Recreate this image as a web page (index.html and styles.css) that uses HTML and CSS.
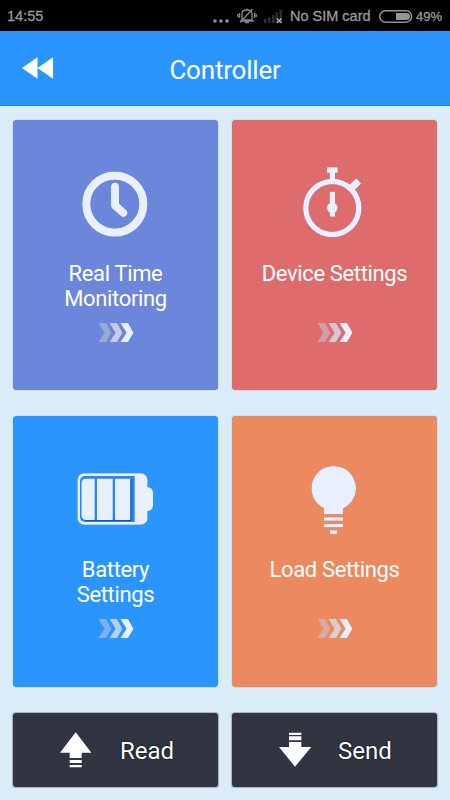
FILE: index.html
```html
<!DOCTYPE html>
<html lang="en">
<head>
    <meta charset="UTF-8">
    <meta name="viewport" content="width=device-width, initial-scale=1.0">
    <title>Controller</title>
    <link rel="stylesheet" href="styles.css">
</head>
<body>

    <!-- Phone status bar -->
    <div class="status-bar">
        <span class="time">14:55</span>
        <svg class="status-dots" width="16" height="4" viewBox="0 0 16 4">
            <circle cx="2" cy="2" r="1.8"/>
            <circle cx="8" cy="2" r="1.8"/>
            <circle cx="14" cy="2" r="1.8"/>
        </svg>
        <svg class="status-mute" width="20" height="18" viewBox="0 0 20 18">
            <path d="M5 13V6.500C5 4 7 3 10 3s5 1 5 3.500V13zM3 14h14M8 15.500h4M10 1.500V3M2.500 6v5M.8 7v3M17.500 6v5M19.200 7v3M3 15.500L15.500 2"/>
        </svg>
        <svg class="status-signal" width="18" height="15" viewBox="0 0 18 15">
            <path class="bars" d="M0 10h2.500v4H0zM4 8.500h2.500V14H4zM8 6h2.500v8H8zM11.500 3.500H14V14h-2.500zM15.500 1H18v13h-2.500z"/>
            <path class="cross" d="M13 9.500l4.500 4.500M17.500 9.500L13 14"/>
        </svg>
        <span class="carrier">No SIM card</span>
        <svg class="status-battery" width="34" height="13" viewBox="0 0 34 13">
            <rect x=".8" y=".8" width="31.800" height="11.400" rx="5.500"/>
            <path class="level" d="M17 3h10.500a3.500 3.500 0 0 1 0 7H17z"/>
        </svg>
        <span class="percent">49%</span>
    </div>

    <header class="header">
        <a href="#" class="back">
            <svg width="32" height="22" viewBox="0 0 32 22">
                <path d="M0 11L15.500 0.300V21.700zM15.500 11L31 0.300V21.700z"/>
            </svg>
        </a>
        <h1>Controller</h1>
    </header>

    <svg class="defs" width="0" height="0">
        <symbol id="arrows" viewBox="0 0 36 21">
            <path opacity=".45" d="M.5 1h7.500l5.500 9.700-5.500 9.300H.5l6-9.300z"/>
            <path opacity=".75" d="M11.500 1h7.500l5.500 9.700-5.500 9.300h-7.500l6-9.300z"/>
            <path d="M22.500 1h7.500l5.500 9.700-5.500 9.300h-7.500l6-9.300z"/>
        </symbol>
    </svg>

    <div class="container">
        <a href="#" class="card monitoring">
            <svg class="icon" viewBox="0 0 81 81">
                <circle cx="39.800" cy="39.100" r="28.500" fill="none" stroke="#e8efff" stroke-width="8.200"/>
                <path d="M40 21.800V40.500L48.300 47.800" fill="none" stroke="#e8efff" stroke-width="8" stroke-linecap="round" stroke-linejoin="round"/>
            </svg>
            <span class="label">Real Time<br>Monitoring</span>
            <svg class="arrows"><use href="#arrows"/></svg>
        </a>

        <a href="#" class="card device">
            <svg class="icon" viewBox="0 0 81 81">
                <circle cx="38.300" cy="43" r="26.500" fill="none" stroke="#e8efff" stroke-width="5.500"/>
                <path d="M33 2.300h10.700v5.400H41V16h-5.300V7.700H33z"/>
                <path d="M62.300 13.300L67.300 18.400 59.500 26 54.300 21z"/>
                <path d="M35.700 26.700H41v25h-5.300z"/>
                <circle cx="38.300" cy="42.800" r="5.400"/>
            </svg>
            <span class="label">Device Settings</span>
            <svg class="arrows"><use href="#arrows"/></svg>
        </a>

        <a href="#" class="card battery">
            <svg class="icon" viewBox="0 0 81 81">
                <path d="M9 12.300h57a6.500 6.500 0 0 1 6.500 6.500V26a5.500 5.500 0 0 1 5.500 5.500V44.500a5.500 5.500 0 0 1-5.500 5.500v7.200a6.500 6.500 0 0 1-6.500 6.500H9a6.500 6.500 0 0 1-6.500-6.500V18.800A6.500 6.500 0 0 1 9 12.300z"/>
                <path fill="#2389f0" d="M10 15h49.700v46H10a5 5 0 0 1-5-5V20a5 5 0 0 1 5-5z"/>
                <path fill="#0d4fa3" d="M54.500 18h2v42h-46v-1.500h44z"/>
                <path d="M11 17.700h8.700V59H11a4.500 4.500 0 0 1-4.500-4.500V22a4.500 4.500 0 0 1 4.500-4.300z"/>
                <path d="M22 17.700h15.700V59H22zM40 17.700h15.300V59H40z"/>
            </svg>
            <span class="label">Battery<br>Settings</span>
            <svg class="arrows"><use href="#arrows"/></svg>
        </a>

        <a href="#" class="card load">
            <svg class="icon" viewBox="0 0 81 81">
                <circle cx="39.700" cy="27.200" r="22.300"/>
                <path d="M30 44h19v9.300H30zM30 56.300h19v3.400H30zM30 63h19v3.300H30zM36 69.300h7V73h-7z"/>
            </svg>
            <span class="label">Load Settings</span>
            <svg class="arrows"><use href="#arrows"/></svg>
        </a>

        <a href="#" class="btn read">
            <svg width="32" height="36" viewBox="0 0 32 36">
                <path d="M15.700 0.300L31.400 20.700H21.700V26h-12V20.700H0zM9.700 28h12v3h-12zM9.700 33h12v2.300h-12z"/>
            </svg>
            <span>Read</span>
        </a>

        <a href="#" class="btn send">
            <svg width="33" height="36" viewBox="0 0 33 36">
                <path d="M16 34.700L0 15h10V10h12.300v5h10zM10 4.300h12.300v4H10zM10 0.700h12.300V3H10z"/>
            </svg>
            <span>Send</span>
        </a>
    </div>

</body>
</html>
```
FILE: styles.css
```css
body, html {
    margin: 0;
    padding: 0;
    font-family: Roboto, Arial, sans-serif;
    background-color: #daecf8;
}
body {
    height: 800px;
    overflow: hidden;
}
a {
    color: white;
    text-decoration: none;
}
svg {
    display: block;
    flex-shrink: 0;
}
.defs {
    position: absolute;
}

/* Status bar */
.status-bar {
    box-sizing: border-box;
    display: flex;
    align-items: center;
    height: 31px;
    padding: 1px 8px 0 7px;
    background-color: black;
    color: #9a9a9a;
    font-family: "Liberation Sans", Arial, sans-serif;
    font-size: 14.5px;
    -webkit-text-stroke: 0.3px #9a9a9a;
    white-space: nowrap;
}
.status-bar svg {
    fill: #959595;
}
.time {
    width: 206px;
}
.status-dots {
    margin-top: 9px;
}
.status-bar .status-mute {
    fill: none;
    stroke: #858585;
    stroke-width: 1.4;
    margin-left: 8px;
}
.status-signal {
    margin-left: 7px;
}
.status-signal .bars {
    fill: #2e2e2e;
}
.status-signal .cross {
    stroke: #aaa;
    stroke-width: 1.5;
}
.carrier {
    width: 81px;
    margin-left: 8px;
}
.status-battery {
    margin-left: 8px;
}
.status-battery rect {
    fill: none;
    stroke: #959595;
    stroke-width: 1.5;
}
.percent {
    margin-left: 3px;
    font-size: 13px;
}

/* Header */
.header {
    box-sizing: border-box;
    display: grid;
    grid-template-columns: 60px 1fr 60px;
    align-items: center;
    height: 75px;
    background-color: #2b95ff;
    border-bottom: 1px solid #1583ee;
}
.header h1 {
    margin: 4px 0 0;
    font-size: 26px;
    font-weight: normal;
    letter-spacing: -0.2px;
    text-align: center;
    color: white;
}
.back {
    padding-left: 22px;
}
.back svg, .btn svg {
    fill: white;
}

/* Cards */
.container {
    display: grid;
    grid-template-columns: 205px 205px;
    grid-template-rows: 270px 271px 74px;
    gap: 26px 14px;
    padding: 14px 13px;
}
.card {
    box-sizing: border-box;
    display: flex;
    flex-direction: column;
    align-items: center;
    padding-top: 45px;
    border-radius: 4px;
    box-shadow: 0 0 1px rgba(0, 0, 0, 0.5);
}
.monitoring {
    background-color: #6b86da;
}
.device {
    background-color: #df6c6d;
}
.battery {
    background-color: #2b95ff;
}
.load {
    background-color: #ed895e;
}
.icon {
    width: 81px;
    height: 81px;
    fill: #e8efff;
    filter: drop-shadow(0.5px 0.5px 0.5px rgba(0, 0, 0, 0.5));
}
.label {
    height: 50px;
    margin-top: 15px;
    font-size: 22px;
    line-height: 25px;
    letter-spacing: -0.35px;
    text-align: center;
}
.arrows {
    width: 36px;
    height: 21px;
    margin-top: 11px;
    fill: #e8efff;
    filter: drop-shadow(0 0.5px 0.5px rgba(0, 0, 0, 0.35));
}

/* Bottom buttons */
.btn {
    display: flex;
    align-items: center;
    background-color: #313542;
    border-radius: 3px;
    box-shadow: 0 0 1px 1px rgba(120, 120, 120, 0.5);
    font-size: 24px;
    text-shadow: 0 0 2px black;
}
.btn span {
    margin: 2px 0 0 28px;
}
.read svg {
    margin-left: 47px;
}
.send svg {
    margin-left: 47px;
}
.send span {
    margin-left: 26px;
}
```
